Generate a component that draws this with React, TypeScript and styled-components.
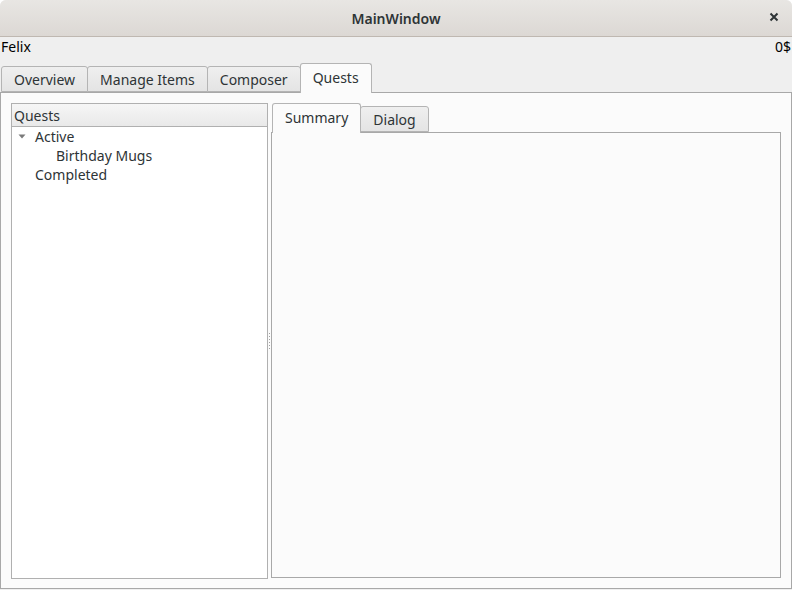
import React, { useState } from "react";
import styled, { createGlobalStyle } from "styled-components";

const GlobalStyle = createGlobalStyle`
  html, body {
    margin: 0;
    padding: 0;
    background: #ffffff;
  }
  body {
    font-family: "Noto Sans", "DejaVu Sans", sans-serif;
    font-size: 14px;
    color: #2e3436;
  }
`;

const Window = styled.div`
  width: 792px;
  height: 590px;
  display: flex;
  flex-direction: column;
  background: #efefef;
  border-radius: 6px 6px 0 0;
  overflow: hidden;
`;

const TitleBar = styled.div`
  height: 36px;
  flex: 0 0 36px;
  display: flex;
  align-items: center;
  justify-content: center;
  position: relative;
  background: linear-gradient(#e8e6e3, #dcd8d4);
  border-bottom: 1px solid #bfb8b1;
  font-weight: 600;
  font-size: 14px;
  color: #2e3436;
`;

const CloseButton = styled.span`
  position: absolute;
  right: 10px;
  top: 9px;
  width: 16px;
  height: 16px;
  display: flex;
  align-items: center;
  justify-content: center;
`;

const InfoRow = styled.div`
  display: flex;
  justify-content: space-between;
  height: 20px;
  padding: 0 1px 0 1px;
  line-height: 20px;
  color: #000;
`;

const TabBar = styled.div<{ $inset?: number }>`
  display: flex;
  align-items: flex-end;
  height: ${(p) => p.$inset ?? 29}px;
  padding-left: 1px;
  position: relative;
  z-index: 1;
`;

const Tab = styled.div<{ $active?: boolean }>`
  height: ${(p) => (p.$active ? 30 : 26)}px;
  box-sizing: border-box;
  padding: 0 12px;
  display: flex;
  align-items: center;
  border: 1px solid #b4b4b4;
  border-bottom: ${(p) => (p.$active ? "none" : "1px solid #b4b4b4")};
  border-radius: 3px 3px 0 0;
  margin-right: -1px;
  margin-bottom: ${(p) => (p.$active ? "-1px" : "0")};
  background: ${(p) =>
    p.$active ? "#fbfbfb" : "linear-gradient(#efefef, #e4e4e4)"};
  color: #2e3436;
  position: relative;
  z-index: ${(p) => (p.$active ? 2 : 1)};
  padding-bottom: ${(p) => (p.$active ? 2 : 0)}px;
`;

const TabPane = styled.div`
  flex: 1;
  margin-bottom: 1px;
  border: 1px solid #a8a8a8;
  background: #fbfbfb;
  padding: 10px 10px 9px 10px;
  display: flex;
  min-height: 0;
`;

const TreePanel = styled.div`
  width: 257px;
  flex: 0 0 257px;
  box-sizing: border-box;
  border: 1px solid #b0b0b0;
  background: #ffffff;
  display: flex;
  flex-direction: column;
`;

const TreeHeader = styled.div`
  height: 22px;
  line-height: 23px;
  padding-left: 2px;
  background: linear-gradient(#f6f6f6, #e9e9e9);
  border-bottom: 1px solid #b0b0b0;
  color: #2e3436;
`;

const TreeList = styled.div`
  padding-top: 0;
`;

const TreeRow = styled.div<{ $level: number }>`
  height: 19px;
  line-height: 19px;
  display: flex;
  align-items: center;
  padding-left: ${(p) => 3 + p.$level * 21}px;
  color: #2e3436;
`;

const Arrow = styled.span`
  width: 20px;
  flex: 0 0 20px;
  display: flex;
  align-items: center;
  padding-left: 3px;
  box-sizing: border-box;
`;

const Splitter = styled.div`
  width: 3px;
  flex: 0 0 3px;
  display: flex;
  align-items: center;
  justify-content: center;
`;

const Grip = styled.div`
  width: 1px;
  display: flex;
  flex-direction: column;
  gap: 2px;
  & > span {
    width: 1px;
    height: 1px;
    background: #a0a0a0;
  }
`;

const RightPanel = styled.div`
  flex: 1;
  display: flex;
  flex-direction: column;
  min-width: 0;
  margin-bottom: 1px;
`;

const InnerPane = styled.div`
  flex: 1;
  border: 1px solid #a8a8a8;
  background: #fbfbfb;
`;

const CloseIcon = () => (
  <svg width="10" height="10" viewBox="0 0 10 10">
    <path d="M1.5 1.5 L8.5 8.5 M8.5 1.5 L1.5 8.5" stroke="#2e3436" strokeWidth="2" />
  </svg>
);

const ExpandArrow = () => (
  <svg width="8" height="5" viewBox="0 0 8 5">
    <path d="M0.5 0.5 L7.5 0.5 L4 4.5 Z" fill="#7a7a7a" />
  </svg>
);

export default function App() {
  const [mainTab, setMainTab] = useState("Quests");
  const [subTab, setSubTab] = useState("Summary");
  const mainTabs = ["Overview", "Manage Items", "Composer", "Quests"];
  const subTabs = ["Summary", "Dialog"];

  return (
    <>
      <GlobalStyle />
      <Window>
        <TitleBar>
          MainWindow
          <CloseButton>
            <CloseIcon />
          </CloseButton>
        </TitleBar>
        <InfoRow>
          <span>Felix</span>
          <span>0$</span>
        </InfoRow>
        <TabBar $inset={35}>
          {mainTabs.map((t) => (
            <Tab key={t} $active={t === mainTab} onClick={() => setMainTab(t)}>
              {t}
            </Tab>
          ))}
        </TabBar>
        <TabPane>
          <TreePanel>
            <TreeHeader>Quests</TreeHeader>
            <TreeList>
              <TreeRow $level={0}>
                <Arrow>
                  <ExpandArrow />
                </Arrow>
                Active
              </TreeRow>
              <TreeRow $level={1}>
                <Arrow />
                Birthday Mugs
              </TreeRow>
              <TreeRow $level={0}>
                <Arrow />
                Completed
              </TreeRow>
            </TreeList>
          </TreePanel>
          <Splitter>
            <Grip>
              {[0, 1, 2, 3, 4, 5].map((i) => (
                <span key={i} />
              ))}
            </Grip>
          </Splitter>
          <RightPanel>
            <TabBar $inset={29}>
              {subTabs.map((t) => (
                <Tab key={t} $active={t === subTab} onClick={() => setSubTab(t)}>
                  {t}
                </Tab>
              ))}
            </TabBar>
            <InnerPane />
          </RightPanel>
        </TabPane>
      </Window>
    </>
  );
}
